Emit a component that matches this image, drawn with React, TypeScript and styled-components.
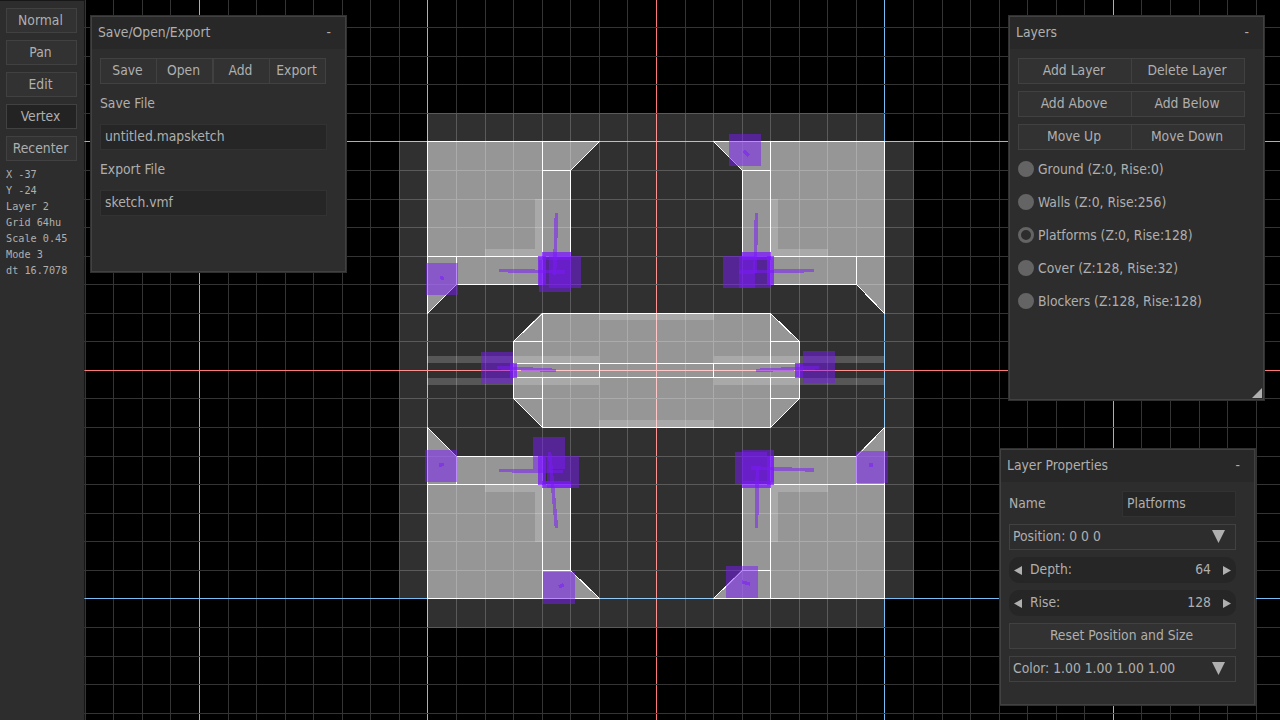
import React from "react";
import styled, { createGlobalStyle, css } from "styled-components";

const GlobalStyle = createGlobalStyle`
  html, body { margin: 0; padding: 0; background: #000; overflow: hidden; }
  * { box-sizing: border-box; }
`;

const Stage = styled.div`
  position: relative;
  display: flex;
  width: 1280px;
  height: 720px;
  overflow: hidden;
  background: #000;
  color: #afafaf;
  font-family: "DejaVu Sans Condensed", "DejaVu Sans", sans-serif;
  font-stretch: condensed;
  font-size: 13.77px;
  white-space: pre;
`;

const Canvas = styled.svg`
  position: absolute;
  inset: 0;
`;

const Sidebar = styled.div`
  position: relative;
  display: flex;
  flex-direction: column;
  gap: 7px;
  width: 84px;
  margin-top: 1px;
  padding: 7px 7px 0 6px;
  background: #2d2d2d;
  box-shadow: 0 0 0 1px rgba(45, 45, 45, 0.5);
`;

const buttonFace = css`
  display: flex;
  align-items: center;
  justify-content: center;
  padding: 0 2px 2px 0;
  background: #323232;
  border: 1px solid #414141;
`;

const ModeButton = styled.div<{ $active?: boolean }>`
  ${buttonFace}
  height: 25px;
  ${(p) => p.$active && "background: #232323;"}
`;

const Stats = styled.div`
  font-family: "DejaVu Sans Mono", monospace;
  font-stretch: normal;
  font-size: 10.2px;
  line-height: 16px;
  margin-top: -1px;
`;

const Window = styled.div<{ $x: number; $y: number; $w: number; $h: number }>`
  position: absolute;
  left: ${(p) => p.$x}px;
  top: ${(p) => p.$y}px;
  width: ${(p) => p.$w}px;
  height: ${(p) => p.$h}px;
  display: flex;
  flex-direction: column;
  background: #2d2d2d;
  border: 1px solid #313131;
  box-shadow: inset 0 0 0 1px #414141;
`;

const TitleBar = styled.div`
  display: flex;
  align-items: center;
  justify-content: space-between;
  height: 32px;
  margin: 1px 1px 0;
  padding: 0 14px 2px 6px;
  background: #282828;
`;

const Body = styled.div`
  display: flex;
  flex-direction: column;
  gap: 7px;
  width: 227px;
  margin: 9px 0 0 9px;
`;

const Row = styled.div`
  display: flex;
  align-items: center;
  height: 26px;
`;

const Button = styled.div`
  ${buttonFace}
  flex: 1 1 0;
  height: 26px;
  & + & { border-left-width: 0; }
`;

const FileActions = styled.div`
  display: grid;
  grid-template-columns: 57px 56px 57px 56px;
  ${Button}:nth-child(3) { border-left-width: 1px; }
`;

const Label = styled.div<{ $w?: number }>`
  flex: ${(p) => (p.$w ? `0 0 ${p.$w}px` : "1 1 0")};
  padding-bottom: 2px;
`;

const Field = styled.div`
  flex: 1 1 0;
  display: flex;
  align-items: center;
  height: 26px;
  padding: 0 0 2px 4px;
  background: #262626;
  border: 1px solid #323232;
`;

const Combo = styled.div`
  display: flex;
  align-items: center;
  justify-content: space-between;
  height: 26px;
  padding: 0 10px 2px 3px;
  border: 1px solid #414141;
`;

const Spinner = styled.div`
  display: flex;
  align-items: center;
  height: 26px;
  padding: 0 5px;
  border-radius: 10px;
  background: #262626;
`;

const SpinLabel = styled.span`
  flex: 1;
  margin-left: 8px;
  padding-bottom: 2px;
`;

const SpinValue = styled.span`
  margin-right: 12px;
  padding-bottom: 2px;
`;

const Radio = styled.span<{ $on?: boolean }>`
  width: 16px;
  height: 16px;
  margin: 0 4px 2px 0;
  border-radius: 50%;
  background: ${(p) => (p.$on ? "#2d2d2d" : "#646464")};
  border: 3px solid #646464;
`;

const Grip = styled.svg`
  position: absolute;
  right: 2px;
  bottom: 2px;
`;

const Down = () => (
  <svg width="13" height="13"><path d="M0 0H13L6.5 13Z" fill="#afafaf" /></svg>
);
const Arrow = ({ right }: { right?: boolean }) => (
  <svg width="8" height="9"><path d={right ? "M0 0V9L8 4.5Z" : "M8 0V9L0 4.5Z"} fill="#afafaf" /></svg>
);

const ORIGIN_X = 656.45;
const ORIGIN_Y = 370.43;
const STEP = 28.56;
const range = (a: number, b: number) => Array.from({ length: b - a + 1 }, (_, i) => a + i);
const lineColor = (k: number) => (k === 0 ? "#ff7878" : k % 8 === 0 ? "#78bef5" : "#343434");
const byWeight = (a: number, b: number) => Number(a % 8 === 0) - Number(b % 8 === 0);

// Translucent solids: [x, y] vertex lists
const solids = [
  "427,141 542,141 542,256 427,256",
  "542,141 599,141 570,170 542,170",
  "542,170 570,170 570,256 542,256",
  "456,256 542,256 542,284 456,284",
  "427,256 456,256 456,284 427,313",
  "770,141 884,141 884,256 770,256",
  "713,141 770,141 770,170 742,170",
  "742,170 770,170 770,256 742,256",
  "770,256 856,256 856,284 770,284",
  "856,256 884,256 884,313 856,284",
  "427,484 542,484 542,598 427,598",
  "456,456 542,456 542,484 456,484",
  "427,427 456,456 456,484 427,484",
  "542,484 570,484 570,570 542,570",
  "542,570 570,570 599,598 542,598",
  "770,484 884,484 884,598 770,598",
  "770,456 856,456 856,484 770,484",
  "884,427 884,484 856,484 856,456",
  "742,484 770,484 770,570 742,570",
  "742,570 770,570 770,598 713,598",
  "542,313 770,313 770,363 542,363",
  "542,377 770,377 770,427 542,427",
  "513,341 542,341 542,363 513,363",
  "513,377 542,377 542,398 513,398",
  "513,341 542,313 542,341",
  "513,398 542,398 542,427",
  "770,341 799,341 799,363 770,363",
  "770,377 799,377 799,398 770,398",
  "770,313 799,341 770,341",
  "770,398 799,398 770,427",
  "513,363 599,363 599,377 513,377",
  "599,363 713,363 713,377 599,377",
  "713,363 799,363 799,377 713,377",
];

// Faint cover strips: x, y, width, height
const strips = [
  [535, 199, 7, 50], [485, 249, 57, 7],
  [771, 199, 7, 50], [771, 249, 57, 7],
  [485, 485, 57, 7], [535, 492, 7, 50],
  [771, 485, 57, 7], [771, 492, 7, 50],
  [599, 313, 115, 7], [599, 420, 115, 7],
  [427, 356, 172, 7], [427, 378, 172, 7],
  [714, 356, 170, 7], [714, 378, 170, 7],
];

const handles = [
  [426, 263], [539, 260], [549, 256], [729, 134], [723, 256], [739, 256],
  [481, 352], [803, 351], [425, 450], [533, 437], [547, 456],
  [735, 452], [742, 450], [856, 451], [543, 572], [726, 566],
];

const joints = [
  [542, 252, 29, 8], [538, 256, 8, 29],
  [742, 252, 29, 8], [767, 256, 7, 29],
  [510, 363, 7, 15], [795, 363, 8, 15],
  [538, 456, 8, 29], [542, 481, 29, 7],
  [767, 456, 7, 29], [742, 481, 29, 7],
];

const links = [
  [499, 270.5, 565, 272], [556.5, 213, 554.5, 275],
  [814, 270.5, 739, 272], [756.5, 213, 755, 273],
  [497, 367.5, 556, 370.5], [819, 367.5, 756, 370.5],
  [549.5, 452, 556.5, 528], [499, 470.5, 563, 471.5],
  [757.5, 467, 756.5, 528], [751, 468, 814, 470],
  [440, 277.5, 444, 278.5], [744, 151, 749, 156],
  [439, 465, 444, 464.5], [869, 465, 873, 465],
  [559, 587, 564, 584.5], [742, 582, 750, 584],
];

const MapCanvas = () => (
  <Canvas width="1280" height="720" shapeRendering="crispEdges">
    {range(-20, 22).sort(byWeight).map((k) => (
      <rect key={k} x={Math.floor(ORIGIN_X + k * STEP)} y={0} width={1} height={720} fill={lineColor(k)} />
    ))}
    {range(-13, 12).sort(byWeight).map((k) => (
      <rect key={k} x={0} y={Math.floor(ORIGIN_Y + k * STEP)} width={1280} height={1} fill={lineColor(k)} />
    ))}
    <path d="M427 113H884V141H914V598H884V628H427V598H399V141H427Z" fill="#fff" fillOpacity={0.188} />
    {solids.map((p) => <polygon key={p} points={p} fill="#fff" fillOpacity={0.495} />)}
    {strips.map(([x, y, w, h], i) => (
      <rect key={i} x={x} y={y} width={w} height={h} fill="#fff" fillOpacity={0.188} />
    ))}
    <g transform="translate(0.5 0.5)">
      {solids.map((p) => <polygon key={p} points={p} fill="none" stroke="#fff" strokeWidth={1} />)}
    </g>
    {handles.map(([x, y], i) => (
      <rect key={i} x={x} y={y} width={32} height={32} fill="#7b19fa" fillOpacity={0.5} />
    ))}
    {joints.map(([x, y, w, h], i) => (
      <rect key={i} x={x} y={y} width={w} height={h} fill="#7b19fa" fillOpacity={0.75} />
    ))}
    {links.map(([x1, y1, x2, y2], i) => (
      <line key={i} x1={x1} y1={y1} x2={x2} y2={y2} stroke="#7b19fa" strokeOpacity={0.52} strokeWidth={3.6} />
    ))}
  </Canvas>
);

const modes = ["Normal", "Pan", "Edit", "Vertex", "Recenter"];
const stats = ["X -37", "Y -24", "Layer 2", "Grid 64hu", "Scale 0.45", "Mode 3", "dt 16.7078"];
const layerActions = [["Add Layer", "Delete Layer"], ["Add Above", "Add Below"], ["Move Up", "Move Down"]];
const layers = [
  "Ground (Z:0, Rise:0)",
  "Walls (Z:0, Rise:256)",
  "Platforms (Z:0, Rise:128)",
  "Cover (Z:128, Rise:32)",
  "Blockers (Z:128, Rise:128)",
];

export default function App() {
  return (
    <Stage>
      <GlobalStyle />
      <MapCanvas />
      <Sidebar>
        {modes.map((m) => <ModeButton key={m} $active={m === "Vertex"}>{m}</ModeButton>)}
        <Stats>{stats.map((s) => <div key={s}>{s}</div>)}</Stats>
      </Sidebar>

      <Window $x={90} $y={15} $w={257} $h={258}>
        <TitleBar><span>Save/Open/Export</span><span>-</span></TitleBar>
        <Body>
          <FileActions>{["Save", "Open", "Add", "Export"].map((b) => <Button key={b}>{b}</Button>)}</FileActions>
          <Row><Label>Save File</Label></Row>
          <Row><Field>untitled.mapsketch</Field></Row>
          <Row><Label>Export File</Label></Row>
          <Row><Field>sketch.vmf</Field></Row>
        </Body>
      </Window>

      <Window $x={1008} $y={15} $w={257} $h={386}>
        <TitleBar><span>Layers</span><span>-</span></TitleBar>
        <Body>
          {layerActions.map((pair) => (
            <Row key={pair[0]}>{pair.map((b) => <Button key={b}>{b}</Button>)}</Row>
          ))}
          {layers.map((l, i) => (
            <Row key={l}><Radio $on={i === 2} /><Label>{l}</Label></Row>
          ))}
        </Body>
        <Grip width="10" height="10"><path d="M10 0V10H0Z" fill="#afafaf" /></Grip>
      </Window>

      <Window $x={999} $y={448} $w={257} $h={258}>
        <TitleBar><span>Layer Properties</span><span>-</span></TitleBar>
        <Body>
          <Row><Label $w={113}>Name</Label><Field>Platforms</Field></Row>
          <Combo><span>Position: 0 0 0</span><Down /></Combo>
          <Spinner><Arrow /><SpinLabel>Depth:</SpinLabel><SpinValue>64</SpinValue><Arrow right /></Spinner>
          <Spinner><Arrow /><SpinLabel>Rise:</SpinLabel><SpinValue>128</SpinValue><Arrow right /></Spinner>
          <Row><Button>Reset Position and Size</Button></Row>
          <Combo><span>Color: 1.00 1.00 1.00 1.00</span><Down /></Combo>
        </Body>
      </Window>
    </Stage>
  );
}
